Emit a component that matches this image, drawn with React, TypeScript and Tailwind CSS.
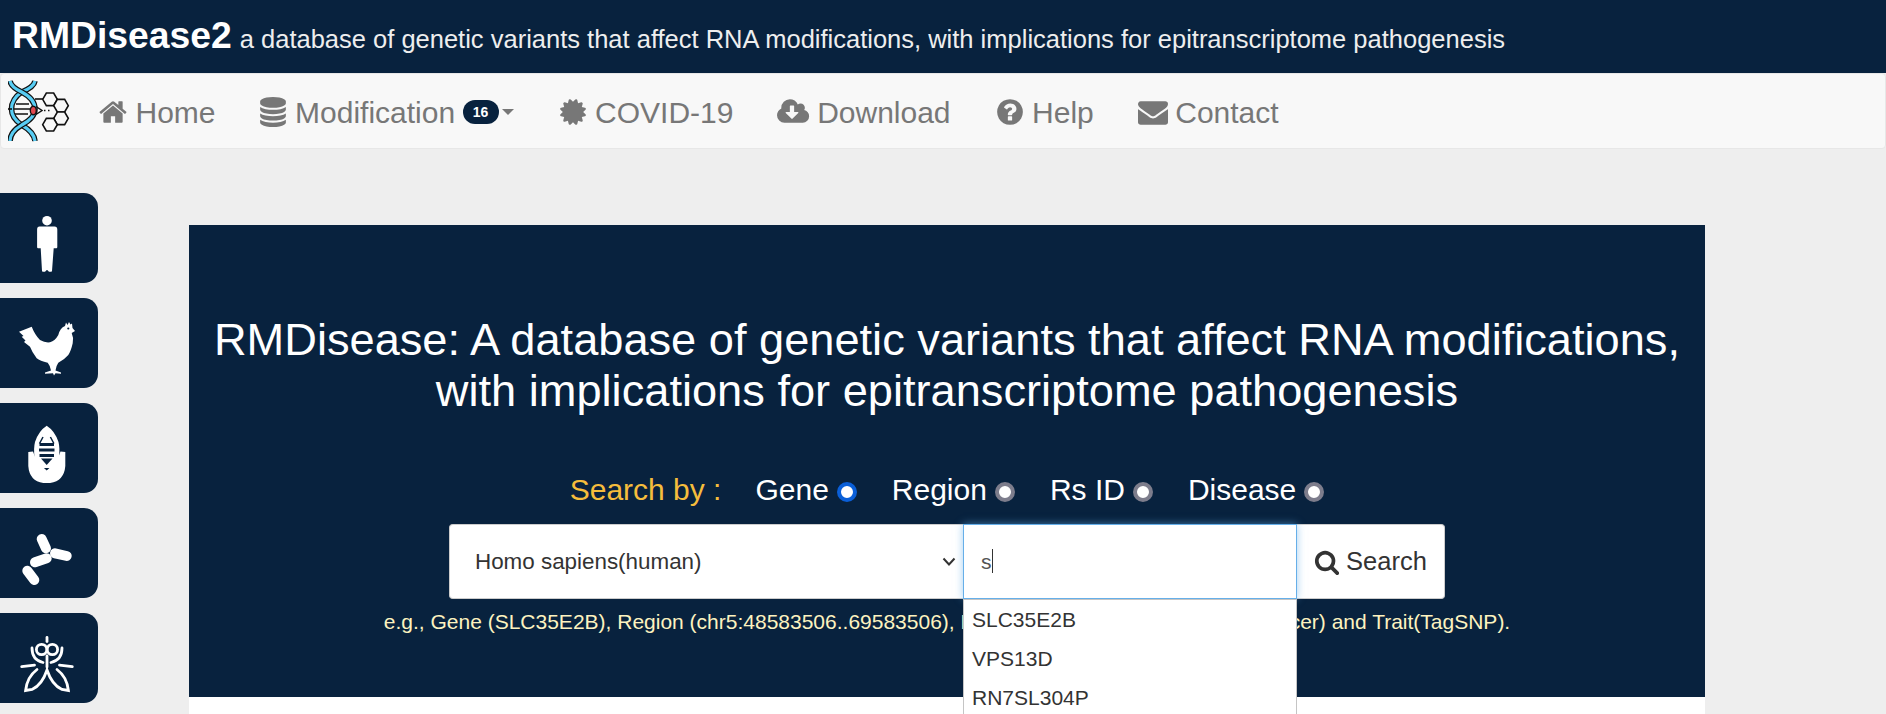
import React from 'react'

const paths = {
  home: 'M1472 992v480q0 26-19 45t-45 19h-384v-384h-256v384h-384q-26 0-45-19t-19-45v-480q0-1 .5-3t.5-3l575-474 575 474q1 2 1 6zm223-69l-62 74q-8 9-21 11h-3q-13 0-21-7l-692-577-692 577q-12 8-24 7-13-2-21-11l-62-74q-8-10-7-23.5t11-21.5l719-599q32-26 76-26t76 26l244 204v-195q0-14 9-23t23-9h192q14 0 23 9t9 23v408l219 182q10 8 11 21.5t-7 23.5z',
  database: 'M896 768q237 0 443-43t325-127v170q0 69-103 128t-280 93.5-385 34.5-385-34.5-280-93.5-103-128v-170q119 84 325 127t443 43zm0 768q237 0 443-43t325-127v170q0 69-103 128t-280 93.5-385 34.5-385-34.5-280-93.5-103-128v-170q119 84 325 127t443 43zm0-384q237 0 443-43t325-127v170q0 69-103 128t-280 93.5-385 34.5-385-34.5-280-93.5-103-128v-170q119 84 325 127t443 43zm0-1152q208 0 385 34.5t280 93.5 103 128v128q0 69-103 128t-280 93.5-385 34.5-385-34.5-280-93.5-103-128v-128q0-69 103-128t280-93.5 385-34.5z',
  certificate: 'M1504 896l138 135q30 28 20 70-12 41-52 51l-188 48 53 186q12 41-19 70-29 31-70 19l-186-53-48 188q-10 40-51 52-12 2-19 2-31 0-51-22l-135-138-135 138q-28 30-70 20-41-11-51-52l-48-188-186 53q-41 12-70-19-31-29-19-70l53-186-188-48q-40-10-52-51-10-42 20-70l138-135-138-135q-30-28-20-70 12-41 52-51l188-48-53-186q-12-41 19-70 29-31 70-19l186 53 48-188q10-41 51-51 41-12 70 19l135 139 135-139q29-30 70-19 41 10 51 51l48 188 186-53q41-12 70 19 31 29 19 70l-53 186 188 48q40 10 52 51 10 42-20 70z',
  download: 'M1280 928q0-14-9-23t-23-9h-224v-352q0-13-9.5-22.5t-22.5-9.5h-192q-13 0-22.5 9.5t-9.5 22.5v352h-224q-13 0-22.5 9.5t-9.5 22.5q0 14 9 23l352 352q9 9 23 9t23-9l351-351q10-12 10-24zm640 224q0 159-112.5 271.5t-271.5 112.5h-1088q-185 0-316.5-131.5t-131.5-316.5q0-130 70-240t188-165q-2-30-2-43 0-212 150-362t362-150q156 0 285.5 87t188.5 231q71-62 166-62 106 0 181 75t75 181q0 76-41 138 130 31 213.5 135.5t83.5 238.5z',
  help: 'M1024 1376v-192q0-14-9-23t-23-9h-192q-14 0-23 9t-9 23v192q0 14 9 23t23 9h192q14 0 23-9t9-23q0-19 21.5-49.5t54.5-49.5q32-18 49-28.5t46-35 44.5-48 28-60.5 12.5-81zm384 192q0 209-103 385.5t-279.5 279.5-385.5 103-385.5-103-279.5-279.5-103-385.5 103-385.5 279.5-279.5 385.5-103 385.5 103 279.5 279.5 103 385.5z',
  envelope: 'M1792 710v794q0 66-47 113t-113 47h-1472q-66 0-113-47t-47-113v-794q44 49 101 87 362 246 497 345 57 42 92.5 65.5t94.5 48 110 24.5h2q51 0 110-24.5t94.5-48 92.5-65.5q170-123 498-345 57-39 100-87zm0-294q0 79-49 151t-122 123q-376 261-468 325-10 7-42.5 30.5t-54 38-52 32.5-57.5 27-50 9h-2q-23 0-50-9t-57.5-27-52-32.5-54-38-42.5-30.5q-91-64-262-182.5t-205-142.5q-62-42-117-115.5t-55-136.5q0-78 41.5-130t118.5-52h1472q65 0 112.5 47t47.5 113z',
  search: 'M1216 832q0-185-131.5-316.5t-316.5-131.5-316.5 131.5-131.5 316.5 131.5 316.5 316.5 131.5 316.5-131.5 131.5-316.5zm512 832q0 52-38 90t-90 38q-54 0-90-38l-343-342q-179 124-399 124-143 0-273.5-55.5t-225-150-150-225-55.5-273.5 55.5-273.5 150-225 225-150 273.5-55.5 273.5 55.5 225 150 150 225 55.5 273.5q0 220-124 399l343 343q37 37 37 90z',
}
paths.help = 'M1024 1376v-192q0-14-9-23t-23-9h-192q-14 0-23 9t-9 23v192q0 14 9 23t23 9h192q14 0 23-9t9-23zm256-672q0-88-55.5-163t-138.5-116-170-41q-243 0-371 213-15 24 8 42l132 100q7 6 19 6 16 0 25-12 53-68 86-92 34-24 86-24 48 0 85.5 26t37.5 59q0 38-20 61t-68 45q-63 28-115.5 86.5t-52.5 125.5v36q0 14 9 23t23 9h192q14 0 23-9t9-23q0-19 21.5-49.5t54.5-49.5q32-18 49-28.5t46-35 44.5-48 28-60.5 12.5-81zm384 192q0 209-103 385.5t-279.5 279.5-385.5 103-385.5-103-279.5-279.5-103-385.5 103-385.5 279.5-279.5 385.5-103 385.5 103 279.5 279.5 103 385.5z'

function FaIcon({ d, w = 1792, size = 30 }: { d: string; w?: number; size?: number }) {
  return (
    <svg width={(size * w) / 1792} height={size} viewBox={`0 0 ${w} 1792`} fill="currentColor" className="shrink-0">
      <path d={d} />
    </svg>
  )
}

function Logo() {
  const hexes = [[42, 19.3], [53, 25.7], [53, 38.3], [42, 44.7]]
  const a = 'M2 1Q3 7 13.7 12Q27 19 27 29Q27 38 13.7 45Q2 52 2 61'
  const b = 'M27 1Q26 7 13.7 12Q3.5 19 3.5 29Q3.5 38 13.7 45Q26 52 27 61'
  return (
    <svg width="62" height="62" viewBox="0 0 62 62" fill="none" className="shrink-0">
      <path d={b} stroke="#111" strokeWidth="5.6" />
      <path d={b} stroke="#58cdf4" strokeWidth="3.2" />
      <path d={a} stroke="#111" strokeWidth="5.6" />
      <path d={a} stroke="#58cdf4" strokeWidth="3.2" />
      <path d="M8 24h13M6 29h16M7 34h13" stroke="#111" strokeWidth="1.6" />
      <path d="M0 29h4" stroke="#111" strokeWidth="1.6" />
      <ellipse cx="25.3" cy="30.5" rx="3" ry="4.2" fill="#e2484f" stroke="#111" strokeWidth="1.4" />
      <path d="M28 26.5l6 4-6 4" stroke="#111" strokeWidth="1.5" />
      <path d="M36 30.5h1.5M40 30.5h1.5" stroke="#111" strokeWidth="1.6" />
      <path d="M27 19h8" stroke="#111" strokeWidth="1.6" />
      {hexes.map(([x, y], i) => (
        <path
          key={i}
          d={`M${x - 7.3} ${y}L${x - 3.65} ${y - 6.3}H${x + 3.65}L${x + 7.3} ${y}L${x + 3.65} ${y + 6.3}H${x - 3.65}Z`}
          stroke="#111"
          strokeWidth="1.6"
          fill="#f8f8f8"
        />
      ))}
    </svg>
  )
}

const speciesIcons = [
  // human
  <svg key="human" width="70" height="70" viewBox="0 0 70 70" fill="#fff">
    <circle cx="35" cy="17.7" r="4.8" />
    <path d="M27.5 23.5h15q2.8 0 2.8 3V44q0 1.2-1 1.2h-2.6L40 68q0 .8-1 .8h-2l-2-2-2 2h-2q-1 0-1-.8L28.7 45.2h-2.6q-1 0-1-1.2V26.5q0-3 2.4-3z" />
  </svg>,
  // chicken
  <svg key="chicken" width="70" height="70" viewBox="0 0 70 70" fill="#fff">
    <path d="M7 23.7L19.7 18.7Q23 27 28 32Q33 35 38 34.3Q43 33 46.3 27Q48 20 53 18L54 14.5L55.5 17L57 14L58.5 16.5L60 15.5L60.5 20L63 23L59.7 25Q62 30 60.7 35.3Q59 43 56.3 47Q52 52 46.3 54.7Q44 58 43.5 62.5L49 64.5V65.7L43.5 65.2L42 67.5L41 65.2L33 65.7V64.5L39 62.5Q38.5 58 35.7 54.7Q28 53 24.7 50.3Q20 44 18 38.7L12 34L13.5 32.5L9.7 28.7L11.5 28Z" />
    <circle cx="56.3" cy="20.5" r="1.1" fill="#08223e" />
  </svg>,
  // corn
  <svg key="corn" width="70" height="70" viewBox="0 0 70 70" fill="#fff">
    <path d="M34.7 12.7Q43 18 46.5 29Q48 35 47 44V55H22.5V44Q21.5 35 23 29Q26.5 18 34.7 12.7Z" />
    <path d="M31 24L27.5 30.5M38.4 24L41.9 30.5" stroke="#08223e" strokeWidth="1.5" fill="none" />
    <path d="M27.5 31.5H42M27 37H42.500M27.500 42.500H42" stroke="#08223e" strokeWidth="2.800" fill="none" />
    <path d="M29 45.500H40.500L34.700 52Z" fill="#08223e" />
    <path d="M16.300 39L21 38.500Q24 49 34.700 57.500Q45.500 49 48.500 38.500L53.300 39V53Q52 69.700 34.700 70.300Q17.500 69.700 16.300 53Z" />
  </svg>,
  // bacteria
  <svg key="bacteria" width="70" height="70" viewBox="0 0 70 70" fill="none" stroke="#fff" strokeWidth="10" strokeLinecap="round">
    <path d="M29.7 21L34 30.3" />
    <path d="M43 35.3L54.7 38" />
    <path d="M23 44.3L34.7 40.3" />
    <path d="M15.3 52.7L22.3 62" />
  </svg>,
  // fly
  <svg key="fly" width="70" height="70" viewBox="0 0 70 70" fill="none" stroke="#fff" strokeWidth="2.8" strokeLinecap="round">
    <path d="M35 14.5V18.5" />
    <circle cx="29.6" cy="26.5" r="5.2" />
    <circle cx="40.4" cy="26.5" r="5.2" />
    <path d="M20 25Q20 37 31 39.5M50 25Q50 37 39 39.5" />
    <path d="M9.7 43.7L22.5 42.2M60.3 43.7L47.5 42.2" />
    <path d="M35 33V44" />
    <path d="M25 46.5Q15 54 13.6 67.5L20 66.5Q30 62 35 47Q40 62 50 66.5L56.4 67.5Q55 54 45 46.5" />
  </svg>,
]

const navItems = [
  { label: 'Home', d: paths.home, w: 1792 },
  { label: 'Modification', d: paths.database, w: 1792, badge: '16' },
  { label: 'COVID-19', d: paths.certificate, w: 1792 },
  { label: 'Download', d: paths.download, w: 1920 },
  { label: 'Help', d: paths.help, w: 1792 },
  { label: 'Contact', d: paths.envelope, w: 1792 },
]

const searchTypes = ['Gene', 'Region', 'Rs ID', 'Disease']

export default function App() {
  return (
    <div className="h-[714px] overflow-hidden bg-[#eeeeee] font-['Liberation_Sans'] text-[#333333]">
      {/* Title bar */}
      <header className="flex h-[73px] items-baseline bg-[#08223e] pl-3 pt-[15px]">
        <span className="text-[37.3px] leading-[40px] font-bold text-white">RMDisease2</span>
        <span className="ml-2 text-[25.5px] leading-[40px] text-[#eeeeee]">
          a database of genetic variants that affect RNA modifications, with implications for epitranscriptome pathogenesis
        </span>
      </header>

      {/* Navbar */}
      <nav className="flex h-[76px] items-center rounded-[4px] border border-[#e7e7e7] bg-[#f8f8f8] pl-[7px]">
        <Logo />
        <ul className="ml-[6px] flex items-center pt-[2px] text-[30px] text-[#777777]">
          {navItems.map((item) => (
            <li key={item.label} className="flex items-center gap-[7.5px] px-[22px] first:pr-[20px]">
              <FaIcon d={item.d} w={item.w} />
              <span>{item.label}</span>
              {item.badge && (
                <span className="flex items-center">
                  <span className="flex h-[24px] w-[36px] items-center justify-center rounded-[12px] bg-[#08223e] text-[14px] font-bold text-white">
                    {item.badge}
                  </span>
                  <span className="ml-[3px] h-0 w-0 border-x-[6px] border-t-[6px] border-x-transparent border-t-[#777777]" />
                </span>
              )}
            </li>
          ))}
        </ul>
      </nav>

      <div className="flex">
        {/* Species sidebar */}
        <aside className="flex w-[189px] shrink-0 flex-col gap-[15px] pt-[44px]">
          {speciesIcons.map((icon, i) => (
            <div key={i} className="flex h-[90px] w-[98px] items-center justify-center rounded-r-[14px] bg-[#08223e] pr-[4px]">
              {icon}
            </div>
          ))}
        </aside>

        {/* Main column */}
        <main className="mt-[76px] h-[600px] w-[1516px] bg-white">
          <section className="flex h-[472px] flex-col items-center bg-[#08223e] pt-[89px] text-white">
            <h1 className="text-center text-[45.2px] leading-[51px] font-normal">
              RMDisease: A database of genetic variants that affect RNA modifications,
              <br />
              with implications for epitranscriptome pathogenesis
            </h1>

            <div className="mt-[56px] flex items-center text-[30px] leading-[36px]">
              <span className="mr-[34px] text-[#f5bd3c]">Search by :</span>
              {searchTypes.map((t, i) => (
                <label key={t} className="mr-[35px] flex items-center gap-[8px] last:mr-0">
                  <span>{t}</span>
                  <input
                    type="radio"
                    name="searchType"
                    defaultChecked={i === 0}
                    className="mt-[3px] h-[20px] w-[20px] appearance-none rounded-full border-[4px] border-[#7d7d8c] bg-white checked:border-[#0a5fd8]"
                  />
                </label>
              ))}
            </div>

            <div className="mt-[16px] flex h-[75px] w-[996px] text-[#333333]">
              <div className="relative w-[514px]">
                <select className="h-full w-full appearance-none rounded-l-[4px] border border-r-0 border-[#cccccc] bg-white pl-[25px] text-[22.4px]">
                  <option>Homo sapiens(human)</option>
                </select>
                <svg width="14" height="10" viewBox="0 0 14 10" fill="none" stroke="#333" strokeWidth="2" className="absolute top-[33px] right-[7px]">
                  <path d="M1.5 1.5L7 7.5L12.5 1.5" />
                </svg>
              </div>
              <div className="relative w-[334px]">
                <input
                  defaultValue="s"
                  className="h-full w-full border border-[#66afe9] bg-white px-[17px] text-[21px] text-[#555555] shadow-[0_0_8px_rgba(102,175,233,0.6)] outline-none"
                />
                <span className="absolute top-[25px] left-[29px] h-[24px] w-px bg-[#333333]" />
                <ul className="absolute top-full left-0 w-full border border-[#c5c5c5] bg-white pb-[20px] pl-[8px] text-[21px] leading-[39px]">
                  <li>SLC35E2B</li>
                  <li>VPS13D</li>
                  <li>RN7SL304P</li>
                  <li>SLC6A1</li>
                </ul>
              </div>
              <button className="flex flex-1 items-center justify-center gap-[6px] rounded-r-[4px] border border-l-0 border-[#cccccc] bg-white text-[25.5px]">
                <FaIcon d={paths.search} size={26} />
                Search
              </button>
            </div>

            <p className="mt-[11px] text-[21px] leading-[24px] text-[#fdf3c0]">
              e.g., Gene (SLC35E2B), Region (chr5:48583506..69583506), Rs ID (rs123456789), Disease (cancer) and Trait(TagSNP).
            </p>
          </section>
        </main>
      </div>
    </div>
  )
}
